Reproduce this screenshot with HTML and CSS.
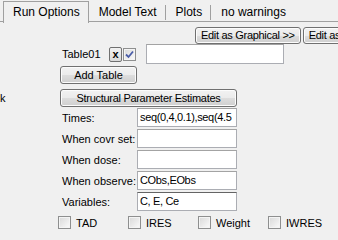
FILE: index.html
```html
<!DOCTYPE html>
<html lang="en">
<head>
    <meta charset="UTF-8">
    <title>Run Options</title>
    <link rel="stylesheet" href="styles.css">
</head>
<body>
    <div class="tabs">
        <div class="tab active">Run Options</div>
        <div class="tab">Model Text</div>
        <div class="tab">Plots</div>
        <div class="tab last">no warnings</div>
    </div>

    <div class="toolbar">
        <div class="btn edit">Edit as Graphical &gt;&gt;</div>
        <div class="btn edit">Edit as Text &lt;&lt;</div>
    </div>

    <div class="form">
        <div class="row table-row">
            <span class="table-lbl">Table01</span>
            <div class="xbtn">x</div>
            <span class="cb checked">
                <svg width="9" height="9" viewBox="0 0 9 9"><path d="M1 4.5 L3.5 7 L8 1.5" fill="none" stroke="#4a5da8" stroke-width="1.8"/></svg>
            </span>
            <div class="box wide"></div>
        </div>

        <div class="row add-row">
            <div class="btn add">Add Table</div>
        </div>

        <div class="row struct-row">
            <span class="cut">k</span>
            <div class="btn struct">Structural Parameter Estimates</div>
        </div>

        <div class="field first">
            <span class="lbl">Times:</span>
            <div class="box">seq(0,4,0.1),seq(4.5</div>
        </div>
        <div class="field">
            <span class="lbl">When covr set:</span>
            <div class="box"></div>
        </div>
        <div class="field">
            <span class="lbl">When dose:</span>
            <div class="box"></div>
        </div>
        <div class="field">
            <span class="lbl">When observe:</span>
            <div class="box">CObs,EObs</div>
        </div>
        <div class="field">
            <span class="lbl">Variables:</span>
            <div class="box dark">C, E, Ce</div>
        </div>

        <div class="checks">
            <label class="check"><span class="cb"></span>TAD</label>
            <label class="check"><span class="cb"></span>IRES</label>
            <label class="check"><span class="cb"></span>Weight</label>
            <label class="check"><span class="cb"></span>IWRES</label>
        </div>
    </div>
</body>
</html>
```

FILE: styles.css
```css
body {
    margin: 0;
    width: 338px;
    height: 240px;
    overflow: hidden;
    background-color: #f0f0f0;
    font-family: "Liberation Sans", Arial, sans-serif;
    font-size: 11px;
    color: #000;
}

/* tab strip */
.tabs {
    display: flex;
    height: 22px;
    padding-left: 3px;
    box-shadow: inset 0 -1px #a0a0a0;
    white-space: nowrap;
}

.tab {
    font-size: 12px;
    height: 20px;
    line-height: 20px;
    margin-top: 2px;
    padding: 0 9px 0 10px;
    background: linear-gradient(#a0a0a0, #a0a0a0) right 3px / 1px 15px no-repeat;
}

.tab.active {
    margin-top: 1px;
    height: 21px;
    padding: 0 8px 0 9px;
    border: 1px solid #a0a0a0;
    border-bottom: none;
    background: #f0f0f0;
}

.tab.last {
    background: none;
}

/* buttons */
.btn {
    box-sizing: border-box;
    height: 18px;
    line-height: 16px;
    text-align: center;
    white-space: nowrap;
    border: 1px solid #707070;
    border-radius: 3px;
    background: linear-gradient(#f2f2f2 0%, #ebebeb 50%, #dddddd 51%, #cfcfcf 100%);
    box-shadow: inset 0 0 0 1px #fcfcfc;
}

.toolbar {
    display: flex;
    gap: 2px;
    margin-top: 5px;
    padding-left: 195px;
}

.btn.edit {
    height: 17px;
    line-height: 15px;
    padding: 0 5px;
    letter-spacing: -0.3px;
}

/* form */
.row {
    display: flex;
    align-items: center;
    padding-left: 60px;
}

.table-row {
    height: 20px;
}

.table-lbl {
    width: 47px;
    margin-left: 2px;
}

.xbtn {
    box-sizing: border-box;
    width: 13px;
    height: 15px;
    line-height: 13px;
    text-align: center;
    border: 1px solid #707070;
    border-radius: 2px;
    background: linear-gradient(#f2f2f2, #dadada);
    font-weight: bold;
}

.cb {
    box-sizing: border-box;
    display: inline-flex;
    align-items: center;
    justify-content: center;
    width: 13px;
    height: 13px;
    border: 1px solid #8e8f8f;
    background: linear-gradient(135deg, #d8d8d8, #fbfbfb);
    box-shadow: inset 0 0 0 1px #f4f4f4;
}

.table-row .cb {
    margin-left: 1px;
}

.box {
    box-sizing: border-box;
    width: 100px;
    height: 19px;
    line-height: 17px;
    padding-left: 2px;
    border: 1px solid #abadb3;
    border-top-color: #a3a3a3;
    background: #fff;
    white-space: nowrap;
    overflow: hidden;
    letter-spacing: -0.35px;
}

.box.wide {
    width: 138px;
    height: 20px;
    margin-left: 10px;
}

.box.dark {
    border-top-color: #646464;
}

.add-row {
    margin-top: 2px;
}

.btn.add {
    width: 77px;
}

.struct-row {
    margin-top: 5px;
    padding-left: 0;
}

.cut {
    width: 60px;
}

.btn.struct {
    width: 177px;
    letter-spacing: -0.3px;
}

.field {
    display: flex;
    align-items: center;
    padding-left: 62px;
    margin-top: 2px;
}

.field.first {
    margin-top: 1px;
}

.lbl {
    width: 75px;
}

.checks {
    display: flex;
    margin-top: 5px;
    padding-left: 58px;
}

.check {
    display: flex;
    align-items: center;
    gap: 5px;
    width: 70px;
    height: 13px;
}
```
